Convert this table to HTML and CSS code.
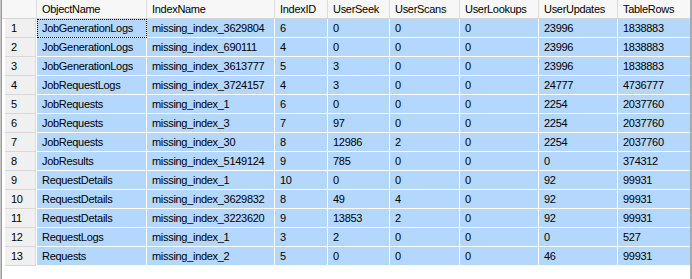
FILE: index.html
```html
<!DOCTYPE html>
<html>
<head>
<meta charset="utf-8">
<link rel="stylesheet" href="styles.css">
</head>
<body>
<div class="frame">
  <div class="grid" role="table">
    <div class="hd"></div><div class="hd">ObjectName</div><div class="hd">IndexName</div><div class="hd">IndexID</div><div class="hd">UserSeek</div><div class="hd">UserScans</div><div class="hd">UserLookups</div><div class="hd">UserUpdates</div><div class="hd last">TableRows</div>

    <div class="rn"><span>1</span></div><div class="c focus">JobGenerationLogs</div><div class="c">missing_index_3629804</div><div class="c">6</div><div class="c">0</div><div class="c">0</div><div class="c">0</div><div class="c">23996</div><div class="c last">1838883</div>
    <div class="rn"><span>2</span></div><div class="c">JobGenerationLogs</div><div class="c">missing_index_690111</div><div class="c">4</div><div class="c">0</div><div class="c">0</div><div class="c">0</div><div class="c">23996</div><div class="c last">1838883</div>
    <div class="rn"><span>3</span></div><div class="c">JobGenerationLogs</div><div class="c">missing_index_3613777</div><div class="c">5</div><div class="c">3</div><div class="c">0</div><div class="c">0</div><div class="c">23996</div><div class="c last">1838883</div>
    <div class="rn"><span>4</span></div><div class="c">JobRequestLogs</div><div class="c">missing_index_3724157</div><div class="c">4</div><div class="c">3</div><div class="c">0</div><div class="c">0</div><div class="c">24777</div><div class="c last">4736777</div>
    <div class="rn"><span>5</span></div><div class="c">JobRequests</div><div class="c">missing_index_1</div><div class="c">6</div><div class="c">0</div><div class="c">0</div><div class="c">0</div><div class="c">2254</div><div class="c last">2037760</div>
    <div class="rn"><span>6</span></div><div class="c">JobRequests</div><div class="c">missing_index_3</div><div class="c">7</div><div class="c">97</div><div class="c">0</div><div class="c">0</div><div class="c">2254</div><div class="c last">2037760</div>
    <div class="rn"><span>7</span></div><div class="c">JobRequests</div><div class="c">missing_index_30</div><div class="c">8</div><div class="c">12986</div><div class="c">2</div><div class="c">0</div><div class="c">2254</div><div class="c last">2037760</div>
    <div class="rn"><span>8</span></div><div class="c">JobResults</div><div class="c">missing_index_5149124</div><div class="c">9</div><div class="c">785</div><div class="c">0</div><div class="c">0</div><div class="c">0</div><div class="c last">374312</div>
    <div class="rn"><span>9</span></div><div class="c">RequestDetails</div><div class="c">missing_index_1</div><div class="c">10</div><div class="c">0</div><div class="c">0</div><div class="c">0</div><div class="c">92</div><div class="c last">99931</div>
    <div class="rn"><span>10</span></div><div class="c">RequestDetails</div><div class="c">missing_index_3629832</div><div class="c">8</div><div class="c">49</div><div class="c">4</div><div class="c">0</div><div class="c">92</div><div class="c last">99931</div>
    <div class="rn"><span>11</span></div><div class="c">RequestDetails</div><div class="c">missing_index_3223620</div><div class="c">9</div><div class="c">13853</div><div class="c">2</div><div class="c">0</div><div class="c">92</div><div class="c last">99931</div>
    <div class="rn"><span>12</span></div><div class="c">RequestLogs</div><div class="c">missing_index_1</div><div class="c">3</div><div class="c">2</div><div class="c">0</div><div class="c">0</div><div class="c">0</div><div class="c last">527</div>
    <div class="rn"><span>13</span></div><div class="c">Requests</div><div class="c">missing_index_2</div><div class="c">5</div><div class="c">0</div><div class="c">0</div><div class="c">0</div><div class="c">46</div><div class="c last">99931</div>
  </div>
</div>
</body>
</html>
```
FILE: styles.css
```css
html, body {
  margin: 0;
  padding: 0;
  background: #fff;
}
.frame {
  width: 692px;
  height: 279px;
  box-sizing: border-box;
  border-left: 1px solid #c4c4c4;
  border-right: 2px solid #a9a9a9;
  padding-left: 1px;
  box-shadow: inset 1px 0 0 #9c9c9c;
  font-family: "Liberation Sans", Arial, sans-serif;
  font-size: 11px;
  letter-spacing: -0.3px;
  color: #000;
}
.grid {
  display: grid;
  grid-template-columns: 35px 110px 128px 53px 62px 70px 79px 79px 72px;
  grid-auto-rows: 19px;
}
.grid > div {
  box-sizing: border-box;
  line-height: 18px;
  white-space: nowrap;
  overflow: hidden;
}
.hd {
  background: #f7f7f7;
  border-right: 1px solid #dcdcdc;
  border-bottom: 1px solid #d6d6d6;
  padding-left: 5px;
}
.hd.last { border-right: none; }
.c {
  background: #b4d7fd;
  border-right: 1px solid #fff;
  border-bottom: 1px solid #fff;
  padding-left: 5px;
}
.c.last { border-right: none; }
.focus {
  outline: 1px dotted #000;
  outline-offset: -1px;
}
.rn {
  padding-left: 3px;
  border-right: 1px solid #fff;
  background: #fff;
}
.rn span {
  display: block;
  height: 19px;
  box-sizing: border-box;
  background: #f0f0f0;
  border-bottom: 1px solid #d8d8d8;
  box-shadow: inset -1px 0 0 #dcdcdc;
  padding-left: 6px;
}
```
